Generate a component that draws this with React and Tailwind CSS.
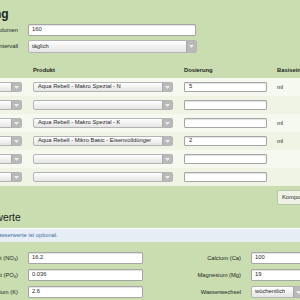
import React from 'react';

const rows = [
  { product: 'Aqua Rebell - Makro Spezial - N', dose: '5', unit: 'ml' },
  { product: '', dose: '', unit: '' },
  { product: 'Aqua Rebell - Makro Spezial - K', dose: '', unit: 'ml' },
  { product: 'Aqua Rebell - Mikro Basic - Eisenvolldünger', dose: '2', unit: 'ml' },
  { product: '', dose: '', unit: '' },
  { product: '', dose: '', unit: '' },
];

const Select = ({ value, className }) => (
  <div className={`flex items-center justify-between rounded-[2px] border border-[#b4b4b4] bg-gradient-to-b from-white to-[#e4e4e4] ${className}`}>
    <span className="truncate pl-[3px] leading-none">{value}</span>
    <span className="flex h-full w-[10px] shrink-0 items-center justify-center border-l border-[#a9a9a9] bg-[#b9b9b9]">
      <svg width="5" height="3" viewBox="0 0 5 3">
        <path d="M0 0h5L2.5 3z" fill="#ececec" />
      </svg>
    </span>
  </div>
);

const Input = ({ value, className }) => (
  <div className={`flex items-center rounded-[1px] border border-[#a6a6a6] bg-white pl-[3px] leading-none shadow-[inset_0_1px_1px_rgba(0,0,0,0.12)] ${className}`}>
    {value}
  </div>
);

const App = () => {
  return (
    <div className="h-[300px] w-[300px] overflow-hidden bg-[#c9ddb0] text-[5.8px] text-[#1f1f1f] [font-family:'Liberation_Sans',Arial,sans-serif]">
      <div className="-ml-[100px] w-[500px]">
        <h1 className="ml-[56px] h-[20px] pt-[8px] text-[12px] font-bold leading-[12px] text-[#1d1d1d]">Düngung</h1>

        <div className="mt-[4px] flex h-[12px] items-center gap-[10px]">
          <label className="w-[118px] text-right">Aquariumvolumen</label>
          <Input value="160" className="h-[12px] w-[168px]" />
        </div>
        <div className="mt-[4px] flex h-[13px] items-center gap-[10px]">
          <label className="w-[118px] text-right">Düngeintervall</label>
          <Select value="täglich" className="h-[13px] w-[169px]" />
        </div>

        <div className="mt-[9px]">
          <div className="flex h-[16px] items-center text-[5.8px] font-bold">
            <span className="ml-[40px] w-[82px]">Hersteller</span>
            <span className="ml-[11px] w-[140px]">Produkt</span>
            <span className="ml-[11px] w-[83px]">Dosierung</span>
            <span className="ml-[10px]">Basiseinheit</span>
          </div>
          {rows.map((row, i) => (
            <div key={i} className={`flex h-[18px] items-center ${i % 2 === 0 ? 'bg-[#f6f9f0]' : 'bg-[#eff4e5]'}`}>
              <Select value="" className="ml-[40px] h-[10px] w-[82px]" />
              <Select value={row.product} className="ml-[11px] h-[10px] w-[140px] [&>span:first-child]:pl-[4px]" />
              <Input value={row.dose} className="ml-[11px] h-[10px] w-[83px] pl-[4px]" />
              <span className="ml-[10px]">{row.unit}</span>
            </div>
          ))}
        </div>

        <div className="mt-[4px] flex h-[15px]">
          <button className="ml-[377px] h-[15px] rounded-[2px] border border-[#b9c6a9] bg-[#eef2e5] px-[4px] leading-none">
            Komponente hinzufügen
          </button>
        </div>

        <h2 className="ml-[61px] mt-[7px] h-[12px] text-[10.3px] leading-[12px] text-[#1d1d1d]">Wasserwerte</h2>

        <div className="mt-[4px] flex h-[14px] items-center border-t border-white bg-[#e6edf4] pl-[50px] text-[#3f6f9f]">
          Die Eingabe der Wasserwerte ist optional.
        </div>

        <div className="mt-[10px] flex flex-col gap-[5px]">
          {[
            ['Nitrat', 'NO', '3', '16.2', 'Calcium (Ca)', '100', false],
            ['Phosphat', 'PO', '4', '0.036', 'Magnesium (Mg)', '19', false],
            ['Kalium (K)', '', '', '2.6', 'Wasserwechsel', 'wöchentlich', true],
          ].map(([l, f, s, v, rl, rv, sel], i) => (
            <div key={i} className="flex h-[12px] items-center">
              <label className="w-[118px] text-right">
                {f ? (
                  <>
                    {l} ({f}
                    <sub className="text-[4px]">{s}</sub>)
                  </>
                ) : (
                  l
                )}
              </label>
              <Input value={v} className="ml-[10px] h-[12px] w-[115px]" />
              <label className="ml-[8px] w-[90px] text-right">{rl}</label>
              {sel ? (
                <Select value={rv} className="ml-[10px] h-[12px] w-[53px]" />
              ) : (
                <Input value={rv} className="ml-[10px] h-[12px] w-[100px]" />
              )}
            </div>
          ))}
        </div>
      </div>
    </div>
  );
};

export default App;
